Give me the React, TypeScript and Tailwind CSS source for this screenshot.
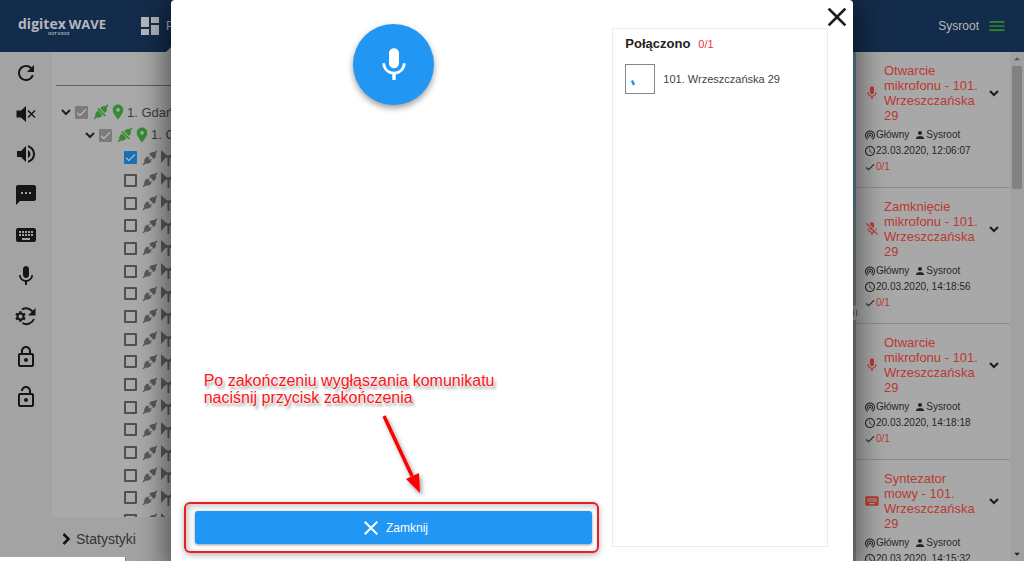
import React from "react";
import {
  MdCheck, MdClose, MdDashboard, MdKeyboard, MdMic, MdMicOff, MdOutlineLock,
  MdOutlineLockOpen, MdPerson, MdPlace, MdRefresh, MdSms, MdVolumeUp, MdWifiTethering,
  MdAccessTime, MdMenu, MdArrowDropUp, MdArrowDropDown,
} from "react-icons/md";

function Chevron({ className }: { className: string }) {
  return (
    <svg viewBox="0 0 16 16" className={`shrink-0 ${className}`} fill="none" stroke="currentColor" strokeWidth="2">
      <path d="M4 6l4 4 4-4" />
    </svg>
  );
}

function VolumeMuted() {
  return (
    <svg viewBox="0 0 24 24" className="size-6" fill="currentColor">
      <path d="M2.500 8.500v7h4.500l5 4.500V4L7 8.500z" />
      <path d="M14 8.500l7 7M21 8.500l-7 7" stroke="currentColor" strokeWidth="1.500" />
    </svg>
  );
}

function SyncSettings() {
  const teeth = [0, 60, 120, 180, 240, 300];
  return (
    <svg viewBox="0 0 24 24" className="size-6" fill="none" stroke="currentColor">
      <path d="M8 5.500A8 8 0 0 1 18.500 7.500M20 15a8 8 0 0 1-11.500 4" strokeWidth="2" />
      <path d="M21.500 4v7.500H14z" fill="currentColor" stroke="none" />
      <circle cx="6.500" cy="12.500" r="3" strokeWidth="2" />
      {teeth.map((a) => (
        <path key={a} d="M6.500 9.500V7.200" strokeWidth="2.400" transform={`rotate(${a} 6.500 12.500)`} />
      ))}
    </svg>
  );
}

function Plug({ joined }: { joined?: boolean }) {
  return (
    <svg viewBox="0 0 16 16" className="size-4 shrink-0" fill="currentColor">
      <path d="M1.200 15.200L.6 14.400l1.600-2C1.800 9.800 3 8 5 6.500l4.600 4.700C8 13 6 14 4 13.500z" />
      <path d="M15.400 1.300l-.9-.8-1.900 1.600C10.500 1.500 8.600 2.200 7.300 4.200l4.600 4.700C13.800 7.400 14.400 5.500 13.800 3.400z" />
      {joined ? (
        <path d="M4.300 5l1.200-1L13 11.500l-1.200 1z" />
      ) : (
        <path d="M6 8l1.800-1.800M8.300 10.200l1.800-1.800" stroke="currentColor" strokeWidth="1" />
      )}
    </svg>
  );
}

function Horn() {
  return (
    <svg viewBox="0 0 20 16" className="h-4 w-5 shrink-0" fill="currentColor">
      <path d="M0 0l6.500 6L0 13zM14 0v13L8 6z" />
      <path d="M7.500 6v10M4 6.500h7" stroke="currentColor" strokeWidth="2" />
    </svg>
  );
}

function Box({ state, label }: { state: "on" | "partial" | "off"; label: string }) {
  const look = {
    on: "border-[#1870b8] bg-[#1870b8]",
    partial: "border-[#7b7b7b] bg-[#7b7b7b]",
    off: "border-[#505050]",
  }[state];
  return (
    <span className="relative size-[13px] shrink-0">
      <input
        type="checkbox"
        aria-label={label}
        defaultChecked={state !== "off"}
        className={`block size-full appearance-none rounded-[1px] border-2 ${look}`}
      />
      {state !== "off" && <MdCheck className="pointer-events-none absolute inset-0 size-[13px] text-[#c4c4c4]" />}
    </span>
  );
}

const tools = [
  { name: "Odśwież", icon: <MdRefresh className="size-6" /> },
  { name: "Wycisz", icon: <VolumeMuted /> },
  { name: "Głośność", icon: <MdVolumeUp className="size-6" /> },
  { name: "Wiadomość", icon: <MdSms className="size-6" /> },
  { name: "Syntezator mowy", icon: <MdKeyboard className="size-6" /> },
  { name: "Mikrofon", icon: <MdMic className="size-6" /> },
  { name: "Synchronizacja", icon: <SyncSettings /> },
  { name: "Zablokuj", icon: <MdOutlineLock className="size-6" /> },
  { name: "Odblokuj", icon: <MdOutlineLockOpen className="size-6" /> },
];

const devices = Array.from({ length: 17 }, (_, i) => i);

const events = [
  { title: "Otwarcie mikrofonu - 101. Wrzeszczańska 29", date: "23.03.2020, 12:06:07", Icon: MdMic },
  { title: "Zamknięcie mikrofonu - 101. Wrzeszczańska 29", date: "20.03.2020, 14:18:56", Icon: MdMicOff },
  { title: "Otwarcie mikrofonu - 101. Wrzeszczańska 29", date: "20.03.2020, 14:18:18", Icon: MdMic },
  { title: "Syntezator mowy - 101. Wrzeszczańska 29", date: "20.03.2020, 14:15:32", Icon: MdKeyboard },
];

function Header() {
  return (
    <header className="flex h-[52px] shrink-0 items-center justify-between bg-[#142c4b] pr-[17px] pl-[18px] text-[#b4b8be]">
      <div className="flex h-full items-center">
        <div className="flex flex-col font-['Open_Sans',sans-serif] font-bold">
          <div className="flex items-center gap-[3px] leading-4">
            <span className="text-[14px]">digitex</span>
            <span className="text-[13px]">WAVE</span>
          </div>
          <span className="ml-[30px] text-[4px] leading-[4px]">OUT VOICE</span>
        </div>
        <a href="#panel" className="relative ml-8 flex h-full items-center gap-1 text-xs">
          <MdDashboard className="size-6" />
          Panel
          <svg viewBox="0 0 24 12" className="absolute bottom-0 left-7 h-3 w-6" fill="#a3a3a3">
            <path d="M0 12L12 0l12 12z" />
          </svg>
        </a>
      </div>
      <button className="flex items-center gap-2 text-xs">
        Sysroot
        <MdMenu className="size-5 text-[#2f8a2a]" />
      </button>
    </header>
  );
}

function Zone({ name, indent }: { name: string; indent: string }) {
  return (
    <div className={`flex items-center ${indent}`}>
      <Chevron className="size-4 text-[#222]" />
      <span className="mr-[5px] ml-px flex"><Box state="partial" label={name} /></span>
      <span className="flex items-center text-[#348b31]">
        <Plug joined />
        <MdPlace className="size-[18px]" />
      </span>
      <span className="whitespace-nowrap">{name}</span>
    </div>
  );
}

function Tree() {
  return (
    <div className="flex min-w-0 flex-1 flex-col">
      <div className="flex min-h-0 flex-1 flex-col bg-[#a9a9a9]">
        <input aria-label="Szukaj" className="ml-1 h-[34px] shrink-0 border-b border-[#606060] bg-transparent" />
        <div className="mt-[15px] min-h-0 flex-1 overflow-hidden">
          <div className="grid h-[431px] auto-rows-fr text-[13px] text-[#3c3c3c]">
            <Zone name="1. Gdańsk" indent="pl-[6px]" />
            <Zone name="1. Centrum" indent="pl-[30px]" />
            {devices.map((i) => (
              <div key={i} className="flex items-center pl-[72px] text-[#5a5a5a]">
                <Box state={i === 0 ? "on" : "off"} label={`Urządzenie ${i + 1}`} />
                <span className="ml-[5px] flex items-center gap-[3px]"><Plug /><Horn /></span>
              </div>
            ))}
          </div>
        </div>
      </div>
      <button className="flex h-11 shrink-0 items-center pl-1 text-[14px] text-[#333]">
        <Chevron className="size-5 -rotate-90 text-[#111]" />
        Statystyki
      </button>
    </div>
  );
}

function EventCard({ title, date, Icon }: (typeof events)[number]) {
  return (
    <li className="border-b border-[#8c8c8c] pt-[11px] pr-2 pb-3 pl-2">
      <div className="flex items-center">
        <Icon className="size-4 shrink-0 text-[#bb3930]" />
        <h3 className="ml-1 w-24 text-[13px] leading-[15px] text-[#bb3930]">{title}</h3>
        <button aria-label="Rozwiń" className="ml-auto">
          <Chevron className="size-4 text-[#1c1c1c]" />
        </button>
      </div>
      <div className="mt-1 text-[10px] leading-4 text-[#262626]">
        <div className="flex items-center">
          <MdWifiTethering className="size-3" />Główny
          <MdPerson className="ml-[5px] size-3" />Sysroot
        </div>
        <div className="flex items-center"><MdAccessTime className="size-3" />{date}</div>
        <div className="flex items-center"><MdCheck className="size-3" /><span className="text-[#bb3930]">0/1</span></div>
      </div>
    </li>
  );
}

function Dialog() {
  return (
    <div className="absolute inset-0 z-20 flex justify-center">
      <section role="dialog" aria-label="Mikrofon" className="relative flex w-2/3 rounded-t bg-white pt-6 pr-[25px] pl-[13px] shadow-[0_8px_28px_6px_rgba(0,0,0,0.5)]">
        <div className="flex min-w-0 flex-1 flex-col">
          <button aria-label="Mikrofon" className="ml-1 flex size-[81px] items-center justify-center self-center rounded-full bg-[#2196f3] text-white shadow-[0_3px_6px_rgba(0,0,0,0.4)]">
            <MdMic className="size-10" />
          </button>
          <div className="mt-auto pl-5">
            <p className="text-[16px] leading-[17px] text-[#fb1418] [text-shadow:0_0_2px_#fff,0_0_2px_#fff,2px_3px_3px_rgba(0,0,0,0.4)]">
              Po zakończeniu wygłąszania komunikatu<br />naciśnij przycisk zakończenia
            </p>
            <svg viewBox="0 0 60 92" className="mt-1 ml-[172px] h-[92px] w-[60px] overflow-visible drop-shadow-[2px_3px_2px_rgba(0,0,0,0.4)]">
              <path d="M8 6L36 66" stroke="#f00" strokeWidth="3.500" />
              <path d="M30 69l13-6 1 20z" fill="#f00" />
            </svg>
          </div>
          <div className="mb-2 rounded-md border-2 border-[#e81e25] py-[7px] pr-[5px] pl-[9px] shadow-[0_2px_6px_rgba(0,0,0,0.3),inset_2px_2px_6px_rgba(0,0,0,0.25)]">
            <button className="flex h-[33px] w-full items-center justify-center gap-[3px] rounded-[3px] bg-[#2196f3] text-xs text-white shadow-[0_1px_3px_rgba(0,0,0,0.4)]">
              <MdClose className="size-6" />Zamknij
            </button>
          </div>
        </div>
        <aside className="mt-1 mb-[14px] ml-[13px] w-[216px] shrink-0 border border-[#ececec] px-3 pt-[7px]">
          <h2 className="flex items-center gap-2 text-[13px] leading-4 font-bold text-[#222]">
            Połączono <span className="text-[11px] font-normal text-[#f8303a]">0/1</span>
          </h2>
          <div className="mt-3 flex items-center gap-2 text-[11px] text-[#444]">
            <span className="size-[30px] border border-[#858585]">
              <svg viewBox="0 0 28 28"><path d="M6 15.500l2 4.500" stroke="#2196f3" strokeWidth="2.500" /></svg>
            </span>
            101. Wrzeszczańska 29
          </div>
        </aside>
        <button aria-label="Zamknij okno" className="absolute top-px right-0 text-[#1d1d1d]">
          <MdClose className="size-8" />
        </button>
      </section>
    </div>
  );
}

export default function App() {
  return (
    <div className="relative flex h-screen flex-col overflow-hidden bg-[#a3a3a3] font-['Liberation_Sans',Arial,sans-serif]">
      <Header />
      <main className="flex min-h-0 flex-1">
        <nav className="flex w-[52px] shrink-0 flex-col">
          <div className="mt-[9px] flex h-[348px] flex-col items-center justify-between text-[#161616]">
            {tools.map((t) => <button key={t.name} aria-label={t.name}>{t.icon}</button>)}
          </div>
        </nav>
        <Tree />
        <div className="flex w-[172px] shrink-0">
          <div className="relative z-10 w-1 shrink-0 bg-linear-to-b from-[#5f8996] from-30% via-[#77857a] via-40% to-[#8e8e83]">
            <span className="absolute top-[254px] -left-[4px] flex size-[14px] items-center justify-center gap-[2px] rounded-full border border-[#bbb] bg-[#a6a6a6]">
              <span className="h-[6px] w-px bg-[#666]" />
              <span className="h-[6px] w-px bg-[#666]" />
            </span>
          </div>
          <ul className="min-w-0 flex-1 overflow-hidden bg-[#a8a8a8]">
            {events.map((e) => <EventCard key={e.date} {...e} />)}
          </ul>
          <div className="flex w-[14px] shrink-0 flex-col items-center bg-[#a1a1a1] text-[#555]">
            <MdArrowDropUp className="size-[14px] shrink-0" />
            <div className="h-[123px] w-[10px] bg-[#818181]" />
            <MdArrowDropDown className="mt-auto size-[14px] shrink-0 text-[#222]" />
          </div>
        </div>
      </main>
      <Dialog />
      <div className="absolute bottom-0 left-0 h-1 w-[126px] border-r border-[#888] bg-white" />
    </div>
  );
}
